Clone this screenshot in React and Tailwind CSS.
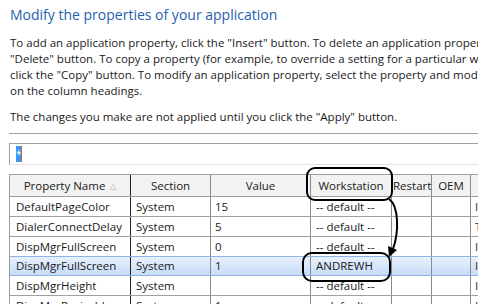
import React from "react";

const rows = [
	{name: "DefaultPageColor", section: "System", value: "15", ws: "-- default --", type: "Integer"},
	{name: "DialerConnectDelay", section: "System", value: "5", ws: "-- default --", type: "Text"},
	{name: "DispMgrFullScreen", section: "System", value: "0", ws: "-- default --", type: "Integer"},
	{name: "DispMgrFullScreen", section: "System", value: "1", ws: "ANDREWH", type: "Integer", selected: true},
	{name: "DispMgrHeight", section: "System", value: "", ws: "-- default --", type: "Integer"},
	{name: "DispMgrResizable", section: "System", value: "1", ws: "-- default --", type: "Integer"},
];

const cols = "grid grid-cols-[121px_80px_100px_81px_40px_39px_60px]";

export default function App() {
	return (
		<div className="relative w-[478px] h-[304px] overflow-hidden bg-white text-[#1a1a1a]" style={{fontFamily: "'Open Sans', sans-serif"}}>
			<div className="pl-[10px] pt-[5px] leading-[20px] text-[14px] text-[#1f5fae] whitespace-nowrap">
				Modify the properties of your application
			</div>

			<div className="pl-[10px] mt-[10px] text-[11.5px] leading-[16px] whitespace-nowrap">
				<div>To add an application property, click the "Insert" button. To delete an application property, select the property and click the</div>
				<div>"Delete" button. To copy a property (for example, to override a setting for a particular workstation), select the property and</div>
				<div>click the "Copy" button. To modify an application property, select the property and modify the values. You can sort by clicking</div>
				<div>on the column headings.</div>
			</div>

			<div className="pl-[10px] mt-[10px] text-[11.5px] leading-[16px] whitespace-nowrap">
				The changes you make are not applied until you click the "Apply" button.
			</div>

			<div className="ml-[9px] mt-[8px] h-px bg-[#a0a0a0]"></div>

			<div className="ml-[9px] mt-[9px] h-[22px] border-t border-l border-[#a3a3a3] border-b-[#e3e3e3] border-b flex items-center pl-[6px]">
				<span className="h-[16px] w-[6px] bg-[#3399ff] text-white text-[10px] leading-[16px] text-center border-r border-[#e0502a]">*</span>
			</div>

			<div className="ml-[9px] mt-[9px] border-t border-l border-[#a0a0a0] text-[11.5px] w-[530px]">
				<div className={`${cols} h-[22px] bg-[#f2f2f2] border-b border-[#a0a0a0]`}>
					<div className="flex items-center justify-center gap-[5px] border-r border-[#222]">
						<span>Property Name</span>
						<span className="text-[8px] text-[#b0b0b0]">△</span>
					</div>
					<div className="flex items-center justify-center border-r border-[#8a8a8a]">Section</div>
					<div className="flex items-center justify-center border-r border-[#8a8a8a]">Value</div>
					<div className="flex items-center justify-center border-r border-[#8a8a8a]">Workstation</div>
					<div className="flex items-center pl-[1px] border-r border-[#8a8a8a]">Restart</div>
					<div className="flex items-center justify-center border-r border-[#8a8a8a]">OEM</div>
					<div></div>
				</div>
				{rows.map((r, i) => (
					<div key={i} className={`${cols} h-[20px] border-b ${r.selected ? "bg-gradient-to-b from-[#e8f1fc] to-[#c6dcf8] border-t border-t-[#8fb3e2] border-b-[#8fb3e2] -mt-px" : "border-[#a0a0a0]"}`}>
						<div className="flex items-center pl-[6px] border-r border-[#222]">{r.name}</div>
						<div className="flex items-center pl-[5px] border-r border-[#8a8a8a]">{r.section}</div>
						<div className="flex items-center pl-[4px] border-r border-[#8a8a8a]">{r.value}</div>
						<div className="flex items-center pl-[5px] border-r border-[#8a8a8a]">{r.ws}</div>
						<div className="border-r border-[#8a8a8a]"></div>
						<div className="border-r border-[#8a8a8a]"></div>
						<div className="flex items-center pl-[4px] text-[#3c2a14]">{r.type}</div>
					</div>
				))}
			</div>

			<svg className="absolute inset-0 pointer-events-none" width="478" height="304" viewBox="0 0 478 304">
				<rect x="307" y="168" width="85" height="32" rx="8" fill="none" stroke="#000" strokeWidth="2" />
				<rect x="303" y="253" width="87" height="28" rx="9" fill="none" stroke="#000" strokeWidth="2" />
				<path d="M389 199 C399 206 399 232 393 249" fill="none" stroke="#000" strokeWidth="2" />
				<polygon points="389,257 388,246 397,250" fill="#000" />
			</svg>
		</div>
	);
}
